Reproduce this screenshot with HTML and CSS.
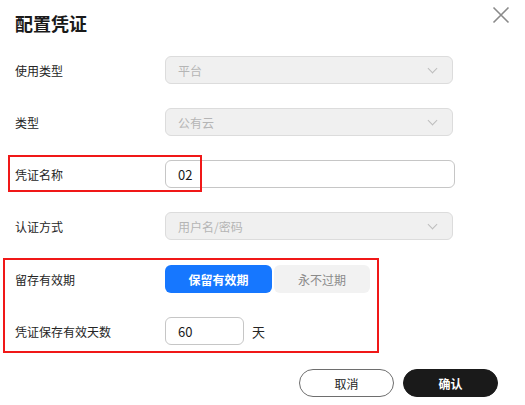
FILE: index.html
```html
<!DOCTYPE html>
<html lang="zh-CN">
<head>
  <meta charset="UTF-8" />
  <title>配置凭证</title>
  <link rel="stylesheet" href="styles.css">
</head>
<body>
  <div class="dialog">
    <!-- 标题 -->
    <h1 class="title">配置凭证</h1>
    <button class="close" aria-label="关闭">
      <svg width="18" height="18" viewBox="0 0 18 18"><path d="M1.5 1.5 L16.5 16.5 M16.5 1.5 L1.5 16.5" stroke="#8a8a8a" stroke-width="1.6" fill="none"/></svg>
    </button>

    <!-- 表单 -->
    <div class="form">
      <div class="row">
        <label>使用类型</label>
        <div class="select disabled"><span>平台</span><i class="arrow"></i></div>
      </div>

      <div class="row">
        <label>类型</label>
        <div class="select disabled"><span>公有云</span><i class="arrow"></i></div>
      </div>

      <div class="row">
        <label>凭证名称</label>
        <input class="text" type="text" value="02" />
        <span class="mark mark-name"></span>
      </div>

      <div class="row">
        <label>认证方式</label>
        <div class="select disabled"><span>用户名/密码</span><i class="arrow"></i></div>
      </div>

      <div class="group">
        <div class="row">
          <label>留存有效期</label>
          <div class="toggle">
            <button class="opt active">保留有效期</button>
            <button class="opt">永不过期</button>
          </div>
        </div>
        <div class="row">
          <label>凭证保存有效天数</label>
          <input class="text short" type="text" value="60" />
          <span class="unit">天</span>
        </div>
        <span class="mark mark-group"></span>
      </div>
    </div>

    <!-- 底部按钮 -->
    <div class="footer">
      <button class="btn cancel">取消</button>
      <button class="btn ok">确认</button>
    </div>
  </div>
</body>
</html>
```

FILE: styles.css
```css
* {
  box-sizing: border-box;
  margin: 0;
  padding: 0;
  font-family: "Noto Sans CJK SC", "Noto Sans", sans-serif;
}

body {
  background: #fff;
  color: #252525;
  width: 525px;
  height: 405px;
  overflow: hidden;
}

.dialog {
  position: relative;
  padding: 10px 15px 0 15px;
}

/* 标题 */
.title {
  font-size: 18px;
  font-weight: 700;
  line-height: 26px;
  color: #1a1a1a;
}

.close {
  position: absolute;
  top: 6px;
  right: 15px;
  border: none;
  background: none;
  width: 18px;
  height: 18px;
  cursor: pointer;
}

/* 表单 */
.form {
  margin-top: 20px;
  display: flex;
  flex-direction: column;
  gap: 24px;
}

.row {
  position: relative;
  display: flex;
  align-items: center;
  height: 28px;
}

.row label {
  width: 150px;
  font-size: 12px;
  color: #252525;
}

.select {
  width: 288px;
  height: 28px;
  border: 1px solid #dcdcdc;
  border-radius: 6px;
  padding: 0 12px;
  display: flex;
  align-items: center;
  justify-content: space-between;
  font-size: 12px;
}

.select.disabled {
  background: #f0f0f0;
  color: #b5b5b5;
}

.arrow {
  width: 7px;
  height: 7px;
  border-right: 1px solid #bdbdbd;
  border-bottom: 1px solid #bdbdbd;
  transform: rotate(45deg);
  margin: -4px 4px 0 0;
}

.text {
  width: 290px;
  height: 28px;
  border: 1px solid #c6c6c6;
  border-radius: 6px;
  padding: 0 12px;
  font-size: 13px;
  color: #1a1a1a;
  outline: none;
}

.text.short {
  width: 79px;
}

.unit {
  margin-left: 8px;
  font-size: 13px;
  color: #252525;
}

.group {
  position: relative;
  display: flex;
  flex-direction: column;
  gap: 24px;
  margin-top: 1px;
}

/* 分段按钮 */
.toggle {
  display: flex;
  gap: 2px;
}

.opt {
  width: 107px;
  height: 28px;
  border: none;
  border-radius: 6px;
  background: #f2f2f2;
  color: #8a8a8a;
  font-size: 12px;
}

.opt + .opt {
  width: 96px;
}

.opt.active {
  background: #1677ff;
  color: #fff;
  font-weight: 700;
}

/* 红框标注 */
.mark {
  position: absolute;
  border: 2px solid #f01818;
  pointer-events: none;
}

.mark-name {
  left: -7px;
  top: -5px;
  width: 194px;
  height: 37px;
}

.mark-group {
  left: -12px;
  top: -7px;
  width: 376px;
  height: 95px;
}

/* 底部 */
.footer {
  margin-top: 24px;
  display: flex;
  justify-content: flex-end;
  gap: 9px;
  padding-right: 12px;
}

.btn {
  width: 95px;
  height: 28px;
  border-radius: 14px;
  font-size: 12px;
  cursor: pointer;
}

.cancel {
  background: #fff;
  border: 1px solid #6e6e6e;
  color: #252525;
}

.ok {
  background: #1a1a1a;
  border: 1px solid #1a1a1a;
  color: #fff;
  font-weight: 700;
}
```
